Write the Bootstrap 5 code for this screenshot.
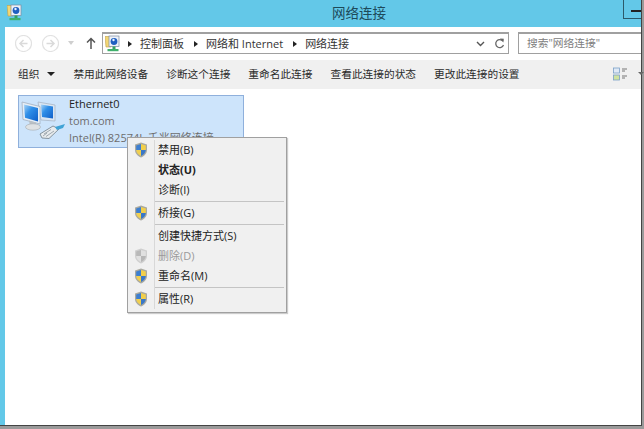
<!DOCTYPE html>
<html lang="zh-CN">
<head>
<meta charset="utf-8">
<title>网络连接</title>
<link href="https://cdn.jsdelivr.net/npm/bootstrap@5.3.0/dist/css/bootstrap.min.css" rel="stylesheet">
<style>
html,body{height:429px;overflow:hidden;background:#fff}
body{font-family:"Open Sans","Noto Sans CJK SC",sans-serif;font-size:11px;line-height:14px;color:#222;position:relative}
svg{filter:blur(.3px)}
.win-shell{width:644px;height:429px;display:flex;flex-direction:column;background:#9a9a9a;padding:0 2px 3px 0}
.win-frame{flex:1;display:flex;flex-direction:column;background:#63c8e8;padding-left:5px;border-right:1px solid #444;border-bottom:1px solid #444;min-height:0}
.title-row{height:27px;flex:none;margin-left:-5px;display:flex;align-items:center;position:relative}
.title-ico{margin-left:7px;margin-top:-2px}
.title-txt{position:absolute;left:332px;top:5px;font-size:13.5px;line-height:16px;color:#1d4a5a}
.min-btn{position:absolute;left:623px;top:0;width:18px;height:19px;border-left:1px solid #2c5a6a;border-bottom:1px solid #2c5a6a}
.min-btn::after{content:"";position:absolute;left:7px;top:10px;width:10px;height:2px;background:#222}
.client{flex:1;background:#fff;display:flex;flex-direction:column;min-height:0}
.nav-row{height:33px;flex:none;display:flex;align-items:center;padding-bottom:1px}
.circ{width:17px;height:17px;margin-left:10px;flex:none}
.drop-tiny{margin-left:9px;width:6px;flex:none}
.up-arrow{margin-left:12px;width:10px;flex:none}
.addr-box{margin-left:6px;width:407px;height:22px;border:1px solid #a0a0a0;border-top-width:2px;display:flex;align-items:center;flex:none;background:#fff;padding-left:2px}
.crumb{margin-left:8px;color:#333;white-space:nowrap}
.crumb-tri{width:0;height:0;border-left:4px solid #222;border-top:3.5px solid transparent;border-bottom:3.5px solid transparent;margin-left:10px;flex:none}
.crumb-tri.first{margin-left:8px}
.chev{margin-left:auto}
.refresh-ico{margin:0 3px 0 9px}
.search-box{margin-left:9px;width:123px;height:22px;border:1px solid #a0a0a0;border-top-width:2px;border-right:0;color:#808080;padding-left:8px;line-height:19px;flex:none;white-space:nowrap;font-size:10.75px}
.tool-row{height:29px;flex:none;background:#f0f0f0;display:flex;align-items:center;padding-left:13px;padding-bottom:1px;color:#2a2a2a;white-space:nowrap;position:relative;font-size:10.7px}
.tool-gap{margin-left:18px}
.tool-tri{width:0;height:0;border-top:4px solid #222;border-left:4px solid transparent;border-right:4px solid transparent;margin-left:8px}
.view-ico{position:absolute;left:608px;top:7px}
.view-tri{position:absolute;left:633px;top:12px;width:0;height:0;border-top:3px solid #666;border-left:3px solid transparent;border-right:3px solid transparent}
.net-item{margin:6px 0 0 13px;width:226px;height:53px;background:#cde4fb;border:1px solid #8fb0dc;display:flex;flex:none}
.net-ico{flex:none}
.net-text{margin-left:3px;margin-top:-1px;white-space:nowrap;line-height:17px}
.net-name{color:#1e1e1e}
.net-sub{color:#6d6d6d}
.ctx{position:absolute;left:127px;top:137px;width:160px;height:176px;background:#f0f0f0;border:1px solid #a0a0a0;box-shadow:1px 1px 1px rgba(0,0,0,.2);padding:2px;color:#222}
.ctx::before{content:"";position:absolute;left:26px;top:2px;bottom:3px;width:1px;background:#d8d8d8}
.ctx-item{height:20px;display:flex;align-items:center;padding-left:28px;position:relative;white-space:nowrap}
.ctx-item svg{position:absolute;left:4px;top:2px}
.ctx-sep{height:1px;background:#c4c4c4;margin:1px 0 1px 25px}
.is-bold{font-weight:700}
.is-off{color:#9a9a9a}
.is-off svg{filter:grayscale(1) blur(.3px);opacity:.45}
</style>
</head>
<body>
<svg width="0" height="0" class="d-block position-absolute">
<defs>
<symbol id="shield" viewBox="0 0 14 16">
<path d="M7 .5 13 2.500V8c0 3.600-2.800 6-6 7.500C3.800 14 1 11.600 1 8V2.500Z" fill="#a9a9a0"/>
<path d="M7 2V8H2.200V3.500Z" fill="#3d7fd0"/>
<path d="M7 2 11.800 3.500V8H7Z" fill="#f2cf4a"/>
<path d="M2.200 8H7V14C4.600 12.800 2.300 11 2.200 8Z" fill="#f0cf50"/>
<path d="M7 8H11.800C11.700 11 9.400 12.800 7 14Z" fill="#3a78c8"/>
</symbol>
<symbol id="net-small" viewBox="0 0 15 17">
<path d="M0 1.500H6V12H1V12Z" fill="#f3d774" stroke="#c0a04a" stroke-width=".6"/>
<rect x="4" y="1" width="10" height="10.500" fill="#eef2f8" stroke="#7c8aa0" stroke-width=".7"/>
<circle cx="9" cy="6.500" r="3.400" fill="#1f5fc0"/>
<circle cx="8.500" cy="5" r="1.200" fill="#e8f2ff"/>
<rect x="7.500" y="11.500" width="3" height="2.500" fill="#33a060"/>
<rect x="2.500" y="14" width="11" height="2.200" fill="#3fb06c"/>
</symbol>
<linearGradient id="scr" x1="0" y1="0" x2="1" y2="1">
<stop offset="0" stop-color="#a8d4f6"/><stop offset=".4" stop-color="#2f8fe8"/><stop offset="1" stop-color="#0f5fc8"/>
</linearGradient>
</defs>
</svg>
<div class="win-shell">
<div class="win-frame">
<div class="title-row">
<svg class="title-ico" width="15" height="17"><use href="#net-small"/></svg>
<span class="title-txt">网络连接</span>
<span class="min-btn"></span>
</div>
<div class="client">
<div class="nav-row">
<svg class="circ" viewBox="0 0 17 17"><circle cx="8.500" cy="8.500" r="8" fill="none" stroke="#e2e2e2" stroke-width="1.200"/><path d="M12.500 8.500H5.500M8.500 5 5 8.500 8.500 12" fill="none" stroke="#dadada" stroke-width="1.500"/></svg>
<svg class="circ" viewBox="0 0 17 17"><circle cx="8.500" cy="8.500" r="8" fill="none" stroke="#e2e2e2" stroke-width="1.200"/><path d="M4.500 8.500H11.500M8.500 5 12 8.500 8.500 12" fill="none" stroke="#dadada" stroke-width="1.500"/></svg>
<svg class="drop-tiny" viewBox="0 0 6 4" height="4"><path d="M0 0H6L3 4Z" fill="#cfcfcf"/></svg>
<svg class="up-arrow" viewBox="0 0 10 12" height="12"><path d="M5 12V1.500M1 5.500 5 1.500 9 5.500" fill="none" stroke="#555" stroke-width="1.500"/></svg>
<div class="addr-box">
<svg width="15" height="17"><use href="#net-small"/></svg>
<i class="crumb-tri first"></i><span class="crumb">控制面板</span>
<i class="crumb-tri"></i><span class="crumb">网络和 Internet</span>
<i class="crumb-tri"></i><span class="crumb">网络连接</span>
<svg class="chev" width="9" height="6" viewBox="0 0 9 6"><path d="M1 1 4.500 4.500 8 1" fill="none" stroke="#555" stroke-width="1.400"/></svg>
<svg class="refresh-ico" width="11" height="12" viewBox="0 0 11 12"><path d="M9 3.200A4 4 0 1 0 9.500 7" fill="none" stroke="#666" stroke-width="1.300"/><path d="M6 .5 9.800 .8 9.400 4.500Z" fill="#666"/></svg>
</div>
<div class="search-box">搜索"网络连接"</div>
</div>
<div class="tool-row">
<span>组织</span><i class="tool-tri"></i>
<span class="tool-gap">禁用此网络设备</span>
<span class="tool-gap">诊断这个连接</span>
<span class="tool-gap">重命名此连接</span>
<span class="tool-gap">查看此连接的状态</span>
<span class="tool-gap">更改此连接的设置</span>
<svg class="view-ico" width="15" height="15" viewBox="0 0 15 15"><rect x=".5" y="1" width="6" height="5" fill="#dfe9f5" stroke="#7aa0c8" stroke-width=".8"/><rect x=".5" y="8" width="6" height="5" fill="#cfe3a0" stroke="#7aa0c8" stroke-width=".8"/><path d="M9 2h5M9 4h3M9 9h5M9 11h3" stroke="#777"/></svg>
<i class="view-tri"></i>
</div>
<div class="net-item">
<svg class="net-ico" width="47" height="50" viewBox="0 0 47 50">
<path d="M19 6 36 9V25L22 24Z" fill="#d9e6f3" stroke="#a8b6c6" stroke-width=".8"/>
<path d="M22 8.500 34 10.500V22.500L23 21Z" fill="url(#scr)"/>
<path d="M3 6 21 10.500V28L4 23.500Z" fill="#e6eef6" stroke="#a2b0c0" stroke-width=".8"/>
<path d="M5 8.500 19 12V25.500L6 21.800Z" fill="url(#scr)"/>
<path d="M10 24.500 17 26.500V30H11Z" fill="#b9c0c6"/>
<ellipse cx="14" cy="31" rx="7.500" ry="3.200" fill="#dfe2e4" stroke="#a5abb0" stroke-width=".6"/>
<path d="M21 38 34 30 40 33 30 42.500 23 42Z" fill="#e7ebee" stroke="#6f7c86" stroke-width=".8"/>
<path d="M25 38 32 33.500M27 40.500 35 35M24 40 28 37" stroke="#7f8b94" stroke-width=".7"/>
<path d="M36 31 46 28 44 32 38 34Z" fill="#3fa3d6"/>
</svg>
<div class="net-text">
<div class="net-name">Ethernet0</div>
<div class="net-sub">tom.com</div>
<div class="net-sub">Intel(R) 82574L 千兆网络连接</div>
</div>
</div>
</div>
</div>
</div>
<div class="ctx">
<div class="ctx-item"><svg width="14" height="16"><use href="#shield"/></svg>禁用(B)</div>
<div class="ctx-item is-bold">状态(U)</div>
<div class="ctx-item">诊断(I)</div>
<div class="ctx-sep"></div>
<div class="ctx-item"><svg width="14" height="16"><use href="#shield"/></svg>桥接(G)</div>
<div class="ctx-sep"></div>
<div class="ctx-item">创建快捷方式(S)</div>
<div class="ctx-item is-off"><svg width="14" height="16"><use href="#shield"/></svg>删除(D)</div>
<div class="ctx-item"><svg width="14" height="16"><use href="#shield"/></svg>重命名(M)</div>
<div class="ctx-sep"></div>
<div class="ctx-item"><svg width="14" height="16"><use href="#shield"/></svg>属性(R)</div>
</div>
<script src="https://cdn.jsdelivr.net/npm/bootstrap@5.3.0/dist/js/bootstrap.bundle.min.js"></script>
</body>
</html>
